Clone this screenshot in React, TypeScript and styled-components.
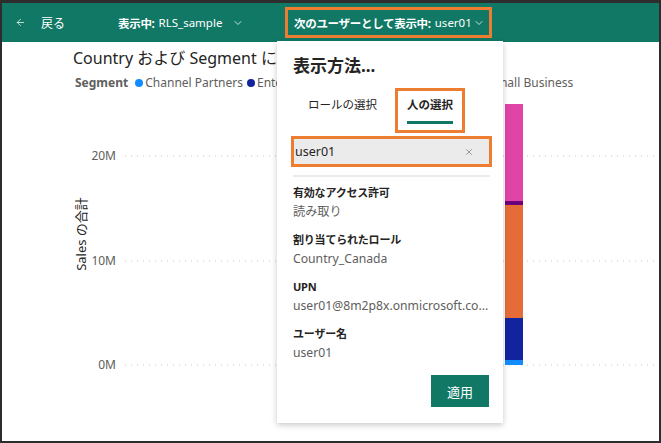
import React from "react";
import styled, { createGlobalStyle } from "styled-components";
import { ChevronDown, ArrowLeft, X } from "lucide-react";

const FONT = `"Segoe UI", "Noto Sans", "Noto Sans CJK JP", sans-serif`;

const GlobalStyle = createGlobalStyle`
  html, body { margin: 0; padding: 0; background: #ffffff; }
  body { font-family: ${FONT}; }
  * { box-sizing: border-box; }
`;

const Frame = styled.div`
  width: 661px;
  height: 443px;
  border: 2px solid #2d2d2d;
  border-top-width: 3px;
  display: flex;
  flex-direction: column;
  overflow: hidden;
  background: #ffffff;
`;

const Header = styled.header`
  height: 39px;
  flex: none;
  background: #117865;
  color: #ffffff;
  display: flex;
  align-items: center;
  padding-left: 13px;
  font-size: 11.5px;
  white-space: nowrap;
`;

const BackButton = styled.div`
  width: 103px;
  display: flex;
  align-items: center;
  gap: 15px;
  font-size: 12px;
`;

const ViewSelector = styled.div`
  width: 167px;
  display: flex;
  align-items: center;
`;

const UserSelector = styled.div`
  width: 207px;
  height: 31px;
  border: 3px solid #ed7d31;
  padding: 0 4px 0 6px;
  display: flex;
  align-items: center;
`;

const Strong = styled.span`
  font-weight: 700;
  margin-right: 4px;
  letter-spacing: -0.3px;
`;

const Chevron = styled.span<{ $gap?: number }>`
  display: inline-flex;
  margin-left: ${(p) => (p.$gap === undefined ? "auto" : `${p.$gap}px`)};
`;

const Content = styled.main`
  flex: 1;
  position: relative;
  background: #ffffff;
`;

const ChartVisual = styled.section`
  padding-top: 6px;
  display: flex;
  flex-direction: column;
`;

const ChartTitle = styled.div`
  padding-left: 71px;
  font-size: 16px;
  line-height: 20px;
  color: #252423;
  white-space: nowrap;
`;

const Legend = styled.div`
  margin-top: 7px;
  padding-left: 73px;
  display: flex;
  align-items: center;
  font-size: 12px;
  line-height: 16px;
  color: #605e5c;
  white-space: nowrap;
`;

const LegendTitle = styled.span`
  font-weight: 700;
  margin-right: 7px;
`;

const LegendItem = styled.span`
  display: inline-flex;
  align-items: center;
  margin-right: 4px;
`;

const Dot = styled.span<{ $color: string }>`
  width: 8px;
  height: 8px;
  border-radius: 50%;
  background: ${(p) => p.$color};
  margin-right: 2px;
`;

const Plot = styled.svg`
  display: block;
  width: 657px;
  height: 350px;
  font-family: ${FONT};
`;

const Panel = styled.div`
  position: absolute;
  top: -1px;
  left: 275px;
  width: 226px;
  height: 382px;
  background: #ffffff;
  box-shadow: 0 2px 6px rgba(0, 0, 0, 0.22);
  padding: 13px 14px 16px 16px;
  display: flex;
  flex-direction: column;
  & > * {
    flex-shrink: 0;
  }
`;

const PanelTitle = styled.div`
  font-size: 17px;
  line-height: 24px;
  font-weight: 700;
  color: #252423;
`;

const TabList = styled.div`
  margin-top: 10px;
  margin-left: 3px;
  display: flex;
  gap: 6px;
`;

const Tab = styled.div<{ $active?: boolean }>`
  border: 3px solid ${(p) => (p.$active ? "#ed7d31" : "transparent")};
  padding: 5px 9px 6px;
  display: flex;
  flex-direction: column;
  align-items: stretch;
  font-size: 11.5px;
  line-height: 18px;
  font-weight: ${(p) => (p.$active ? 700 : 400)};
  color: #252423;
  white-space: nowrap;
`;

const Underline = styled.span<{ $active?: boolean }>`
  margin-top: 7px;
  height: 3px;
  background: ${(p) => (p.$active ? "#117865" : "transparent")};
`;

const SearchBox = styled.div`
  margin: 3px -3px 0 -2px;
  height: 31px;
  border: 3px solid #ed7d31;
  background: #ebebeb;
  display: flex;
  align-items: center;
  padding: 0 15px 0 1px;
  font-size: 12.5px;
  color: #252423;
`;

const SearchText = styled.span`
  flex: 1;
`;

const ClearIcon = styled.span`
  display: inline-flex;
  color: #605e5c;
`;

const Divider = styled.div`
  margin: 8px -1px 0 0;
  height: 2px;
  background: #edebe9;
`;

const InfoList = styled.div`
  margin-top: 7px;
  display: flex;
  flex-direction: column;
  gap: 10px;
`;

const InfoItem = styled.div`
  display: flex;
  flex-direction: column;
`;

const InfoLabel = styled.div`
  font-size: 11px;
  line-height: 18px;
  font-weight: 700;
  letter-spacing: -0.2px;
  color: #252423;
`;

const InfoValue = styled.div`
  font-size: 12.2px;
  line-height: 19px;
  color: #605e5c;
  white-space: nowrap;
`;

const Footer = styled.div`
  margin-top: auto;
  display: flex;
  justify-content: flex-end;
`;

const ApplyButton = styled.button`
  width: 58px;
  height: 32px;
  border: none;
  background: #117865;
  color: #ffffff;
  font-family: ${FONT};
  font-size: 13px;
  padding: 0;
`;

const legendItems = [
  { name: "Channel Partners", color: "#118dff" },
  { name: "Enterprise", color: "#12239e" },
  { name: "Government", color: "#e66c37" },
  { name: "Midmarket", color: "#6b007b" },
  { name: "Small Business", color: "#e044a7" },
];

const gridLines = [
  { label: "20M", y: 65 },
  { label: "10M", y: 170 },
  { label: "0M", y: 274 },
];

const segments = [
  { color: "#e044a7", y: 13, h: 97 },
  { color: "#6b007b", y: 110, h: 4 },
  { color: "#e66c37", y: 114, h: 113 },
  { color: "#12239e", y: 227, h: 42 },
  { color: "#118dff", y: 269, h: 5 },
];

const info = [
  { label: "有効なアクセス許可", value: "読み取り" },
  { label: "割り当てられたロール", value: "Country_Canada" },
  { label: "UPN", value: "user01@8m2p8x.onmicrosoft.co..." },
  { label: "ユーザー名", value: "user01" },
];

export default function App() {
  return (
    <>
      <GlobalStyle />
      <Frame>
        <Header>
          <BackButton>
            <ArrowLeft size={11} strokeWidth={1.6} />
            <span>戻る</span>
          </BackButton>
          <ViewSelector>
            <Strong>表示中:</Strong>
            <span>RLS_sample</span>
            <Chevron $gap={10}>
              <ChevronDown size={12} strokeWidth={1.5} />
            </Chevron>
          </ViewSelector>
          <UserSelector>
            <Strong>次のユーザーとして表示中:</Strong>
            <span>user01</span>
            <Chevron>
              <ChevronDown size={12} strokeWidth={1.5} />
            </Chevron>
          </UserSelector>
        </Header>
        <Content>
          <ChartVisual>
            <ChartTitle>Country および Segment による Sales の合計</ChartTitle>
            <Legend>
              <LegendTitle>Segment</LegendTitle>
              {legendItems.map((it) => (
                <LegendItem key={it.name}>
                  <Dot $color={it.color} />
                  {it.name}
                </LegendItem>
              ))}
            </Legend>
            <Plot viewBox="0 0 657 350">
              {gridLines.map((g) => (
                <g key={g.label}>
                  <line
                    x1={123}
                    x2={653}
                    y1={g.y}
                    y2={g.y}
                    stroke="#c8c6c4"
                    strokeWidth={1}
                    strokeDasharray="1 5"
                  />
                  <text x={114} y={g.y + 4} textAnchor="end" fontSize={12} fill="#605e5c">
                    {g.label}
                  </text>
                </g>
              ))}
              {segments.map((s) => (
                <rect key={s.color} x={503} y={s.y} width={18} height={s.h} fill={s.color} />
              ))}
              <text
                transform="translate(79 143) rotate(-90)"
                textAnchor="middle"
                dominantBaseline="central"
                fontSize={13}
                fill="#252423"
              >
                Sales の合計
              </text>
            </Plot>
          </ChartVisual>
          <Panel>
            <PanelTitle>表示方法...</PanelTitle>
            <TabList>
              <Tab>
                <span>ロールの選択</span>
                <Underline />
              </Tab>
              <Tab $active>
                <span>人の選択</span>
                <Underline $active />
              </Tab>
            </TabList>
            <SearchBox>
              <SearchText>user01</SearchText>
              <ClearIcon>
                <X size={10} strokeWidth={1.4} />
              </ClearIcon>
            </SearchBox>
            <Divider />
            <InfoList>
              {info.map((it) => (
                <InfoItem key={it.label}>
                  <InfoLabel>{it.label}</InfoLabel>
                  <InfoValue>{it.value}</InfoValue>
                </InfoItem>
              ))}
            </InfoList>
            <Footer>
              <ApplyButton>適用</ApplyButton>
            </Footer>
          </Panel>
        </Content>
      </Frame>
    </>
  );
}
